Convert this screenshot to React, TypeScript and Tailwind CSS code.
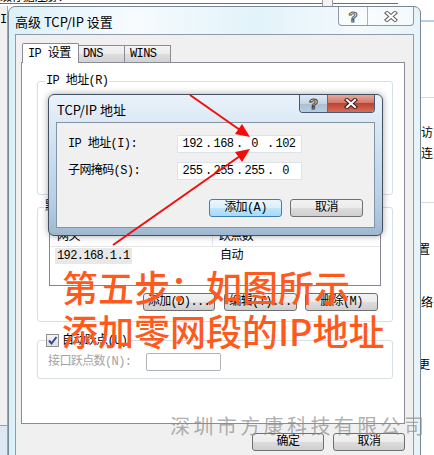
import { Fragment } from "react";

const mono =
  "font-['Liberation_Mono','Noto_Sans_CJK_SC',monospace] text-[12px] leading-[14px] tracking-[-0.6px]";
const sans = "font-['Noto_Sans_CJK_SC','Noto_Sans',sans-serif]";

function Btn({ label, w, focus = false }: { label: string; w: string; focus?: boolean }) {
  return (
    <div
      className={`${w} h-[18px] shrink-0 rounded-[3px] border flex items-center justify-center text-black ${mono} ${
        focus
          ? "border-[#3c7fb1] bg-[linear-gradient(#eaf6fd,#d9f0fc_50%,#bee6fd_50%,#a7d9f5)]"
          : "border-[#707070] bg-[linear-gradient(#f2f2f2,#ebebeb_50%,#dddddd_50%,#cfcfcf)]"
      }`}
    >
      {label}
    </div>
  );
}

function IpField({ parts }: { parts: string[] }) {
  return (
    <div className={`w-[125px] h-[18px] bg-white border border-[#dde3ea] flex items-center pl-[2px] ${mono}`}>
      {parts.map((p, i) => (
        <Fragment key={i}>
          {i > 0 && <span className="w-[6px] text-center">.</span>}
          <span className="w-[25px] text-center">{p}</span>
        </Fragment>
      ))}
    </div>
  );
}

function CloseGlyph({ fill, edge }: { fill: string; edge: string }) {
  return (
    <svg width="14" height="11" viewBox="0 0 14 11">
      <path d="M3 2 L11 9 M11 2 L3 9" stroke={edge} strokeWidth="4.2" strokeLinecap="square" />
      <path d="M3 2 L11 9 M11 2 L3 9" stroke={fill} strokeWidth="2" strokeLinecap="square" />
    </svg>
  );
}

export default function App() {
  return (
    <div className="relative w-[434px] h-[455px] overflow-hidden bg-white">
      {/* windows behind */}
      <div className={`absolute left-0 top-[-9px] text-black ${mono}`}>缀存据注册:</div>
      <div className="absolute left-0 top-[3px] w-[398px] h-px bg-[#6f6f6f]" />
      <div className="absolute left-[322px] top-0 w-[11px] h-[6px] border-x border-[#9a9a9a] bg-[#f3f3f3]" />
      <div className="absolute left-0 top-[6px] w-[8px] h-[449px] bg-[#f0f0f0] border-r border-[#9aa2aa] flex flex-col">
        <span className={`mt-[7px] text-black ${mono}`}>Ir</span>
        <div className="mt-auto h-[30px] border-t border-[#8fa3b8] bg-[#dce9f5]" />
      </div>
      <div className={`absolute left-[413px] top-0 w-[21px] h-[455px] bg-white flex flex-col text-black ${sans} text-[12px] leading-[14px]`}>
        <div className="mt-[20px] h-[2px] bg-[#b7d0e8]" />
        <div className="mt-[75px] h-px bg-[#dadada]" />
        <span className="mt-[27px] pl-[8px]">访</span>
        <span className="mt-[7px] pl-[8px]">连</span>
        <div className="mt-[42px] h-px bg-[#dadada]" />
        <span className="mt-[39px] pl-[5px]">置</span>
        <span className="mt-[39px] pl-[8px]">络</span>
        <span className="mt-[48px] pl-[5px]">更</span>
      </div>

      {/* 高级 TCP/IP 设置 */}
      <div className="absolute left-[8px] top-[6px] w-[413px] h-[462px] rounded-t-[7px] border border-[#7a8794] bg-[linear-gradient(90deg,#dcf0f8,#f7fbfd_30%,#e2f3fa_60%,#f4f9fc_85%,#e6f3f9)] px-[6px] flex flex-col">
        <div className="h-[27px] flex items-start">
          <span className={`${sans} text-[13px] leading-[16px] text-black mt-[7px]`}>高级 TCP/IP 设置</span>
          <div className="ml-auto flex h-[19px] rounded-b-[4px] border border-t-0 border-[#8d99a6] bg-white/50 overflow-hidden">
            <div className="w-[29px] flex items-center justify-center border-r border-[#a9b4bf]">
              <span className="text-[15px] leading-[15px] font-bold text-white [-webkit-text-stroke:1px_#5b5b5b] font-['Liberation_Sans',sans-serif]">?</span>
            </div>
            <div className="w-[45px] flex items-center justify-center">
              <CloseGlyph fill="#ffffff" edge="#6a6a6a" />
            </div>
          </div>
        </div>
        <div className="flex-1 border border-[#8f9ba8] bg-[#f0f0f0] pl-[5px] pr-[8px] pt-[8px] flex flex-col">
          {/* tabs */}
          <div className={`flex items-end h-[19px] pl-px text-black ${mono}`}>
            <div className="relative z-10 h-[20px] -mb-px w-[57px] bg-white border border-b-0 border-[#898c95] rounded-t-[2px] pl-[5px] pt-[3px]">
              IP 设置
            </div>
            <div className="h-[17px] w-[47px] -ml-px border border-b-0 border-[#898c95] bg-[linear-gradient(#f3f3f3,#ebebeb_50%,#dedede_50%,#d2d2d2)] pl-[4px] pt-[1px]">
              DNS
            </div>
            <div className="h-[17px] w-[47px] -ml-px border border-b-0 border-[#898c95] bg-[linear-gradient(#f3f3f3,#ebebeb_50%,#dedede_50%,#d2d2d2)] pl-[5px] pt-[1px]">
              WINS
            </div>
          </div>

          {/* panel */}
          <div className={`h-[362px] border border-[#898c95] bg-white flex flex-col text-black ${mono}`}>
            <div className="relative mt-[18px] ml-[15px] w-[356px] h-[114px] border border-[#d5dfe5] rounded-[3px]">
              <span className="absolute left-[7px] top-[-8px] bg-white px-px">IP 地址(R)</span>
            </div>

            <div className="relative mt-[12px] ml-[15px] w-[356px] h-[115px] border border-[#d5dfe5] rounded-[3px] flex flex-col">
              <span className="absolute left-[6px] top-[-8px] bg-white px-px">默认网关(F):</span>
              <div className="mt-[17px] ml-[11px] w-[332px] h-[61px] border border-[#828790] flex flex-col">
                <div className="h-[21px] flex border-b border-[#e5e5e5]">
                  <div className="w-[163px] border-r border-[#e5e5e5] pl-[7px] pt-[4px]">网关</div>
                  <div className="pl-[6px] pt-[4px]">跃点数</div>
                </div>
                <div className="h-[16px] mt-px flex items-center">
                  <div className="w-[164px] pl-[5px]">
                    <span className="bg-[#e8e8e8] px-[2px] py-px">192.168.1.1</span>
                  </div>
                  <div className="pl-[6px]">自动</div>
                </div>
              </div>
              <div className="mt-[7px] ml-[105px] flex">
                <Btn label="添加(D)..." w="w-[72px]" />
                <div className="ml-[9px]">
                  <Btn label="编辑(T)..." w="w-[73px]" />
                </div>
                <div className="ml-[8px]">
                  <Btn label="删除(M)" w="w-[73px]" />
                </div>
              </div>
            </div>

            <div className="relative mt-[18px] ml-[15px] w-[356px] h-[39px] border border-[#d5dfe5] rounded-[3px]">
              <div className="absolute left-[8px] top-[-7px] h-[13px] flex items-center gap-[3px] bg-white pr-[2px]">
                <div className="w-[13px] h-[13px] border border-[#8e8f8f] bg-[linear-gradient(#f4f4f4,#dedede)] flex items-center justify-center">
                  <svg width="11" height="11" viewBox="0 0 11 11">
                    <path d="M2 5.5 L4.5 8.5 L9.5 2" stroke="#2a4a9a" strokeWidth="2" fill="none" />
                  </svg>
                </div>
                <span>自动跃点(U)</span>
              </div>
              <div className="mt-[12px] ml-[10px] flex items-center h-[18px]">
                <span className="w-[98px] text-[#a3a3a3]">接口跃点数(N):</span>
                <div className="w-[75px] h-[18px] border border-[#afb4b8] rounded-[2px] bg-white" />
              </div>
            </div>
          </div>

          <div className="mt-[9px] flex justify-end gap-[9px]">
            <Btn label="确定" w="w-[72px]" />
            <Btn label="取消" w="w-[72px]" />
          </div>
        </div>
      </div>

      {/* TCP/IP 地址 */}
      <div className="absolute left-[48px] top-[94px] w-[335px] h-[142px] rounded-[6px] border border-[#42515f] bg-[linear-gradient(180deg,#e9f2fa,#c9ddef_45%,#b4cce3_80%,#9fb8d0)] shadow-[0_0_7px_rgba(0,0,0,0.35)] px-[7px] pb-[7px] flex flex-col">
        <div className="h-[27px] flex items-start">
          <span className={`${sans} text-[13px] leading-[16px] text-black mt-[7px] pl-px`}>TCP/IP 地址</span>
          <div className="ml-auto flex h-[18px] rounded-b-[4px] border border-t-0 border-[#4b5a6b] overflow-hidden">
            <div className="w-[28px] flex items-center justify-center border-r border-[#5d6c7c] bg-[linear-gradient(#dfe9f3,#c4d4e4_50%,#aabdd1_50%,#b9cde0)]">
              <span className="text-[15px] leading-[15px] font-bold text-white [-webkit-text-stroke:1px_#3a3a3a] font-['Liberation_Sans',sans-serif]">?</span>
            </div>
            <div className="w-[46px] flex items-center justify-center bg-[linear-gradient(#e8a89c,#d47a6a_45%,#c2412f_50%,#d0705c)]">
              <CloseGlyph fill="#ffffff" edge="#3b2020" />
            </div>
          </div>
        </div>
        <div className={`flex-1 border border-[#8394a5] bg-[#f0f0f0] pt-[12px] flex flex-col text-black ${mono}`}>
          <div className="flex items-center pl-[11px]">
            <span className="w-[109px]">IP 地址(I):</span>
            <IpField parts={["192", "168", "0", "102"]} />
          </div>
          <div className="mt-[9px] flex items-center pl-[11px]">
            <span className="w-[109px]">子网掩码(S):</span>
            <IpField parts={["255", "255", "255", "0"]} />
          </div>
          <div className="mt-[19px] flex justify-end gap-[8px] pr-[11px]">
            <Btn label="添加(A)" w="w-[73px]" focus />
            <Btn label="取消" w="w-[73px]" />
          </div>
        </div>
      </div>

      {/* red arrows */}
      <svg className="absolute left-0 top-0 pointer-events-none" width="434" height="455" viewBox="0 0 434 455">
        <line x1="190" y1="95" x2="240" y2="130" stroke="#f20d0d" strokeWidth="2" />
        <polygon points="250,137 235,134 242,124" fill="#f20d0d" />
        <line x1="113" y1="245" x2="240" y2="156" stroke="#f20d0d" strokeWidth="2" />
        <polygon points="250,149 242,162 235,152" fill="#f20d0d" />
      </svg>

      {/* annotation */}
      <div className={`absolute left-[62px] top-[264px] text-[36px] leading-[44px] font-medium text-[#ff5a1e] whitespace-nowrap ${sans}`}>
        <div>第五步：如图所示</div>
        <div>添加零网段的IP地址</div>
      </div>

      <div className={`absolute left-[170px] top-[416px] text-[20px] leading-[20px] tracking-[3.4px] text-[#8c8c8c]/70 whitespace-nowrap ${sans}`}>
        深圳市方康科技有限公司
      </div>
    </div>
  );
}
